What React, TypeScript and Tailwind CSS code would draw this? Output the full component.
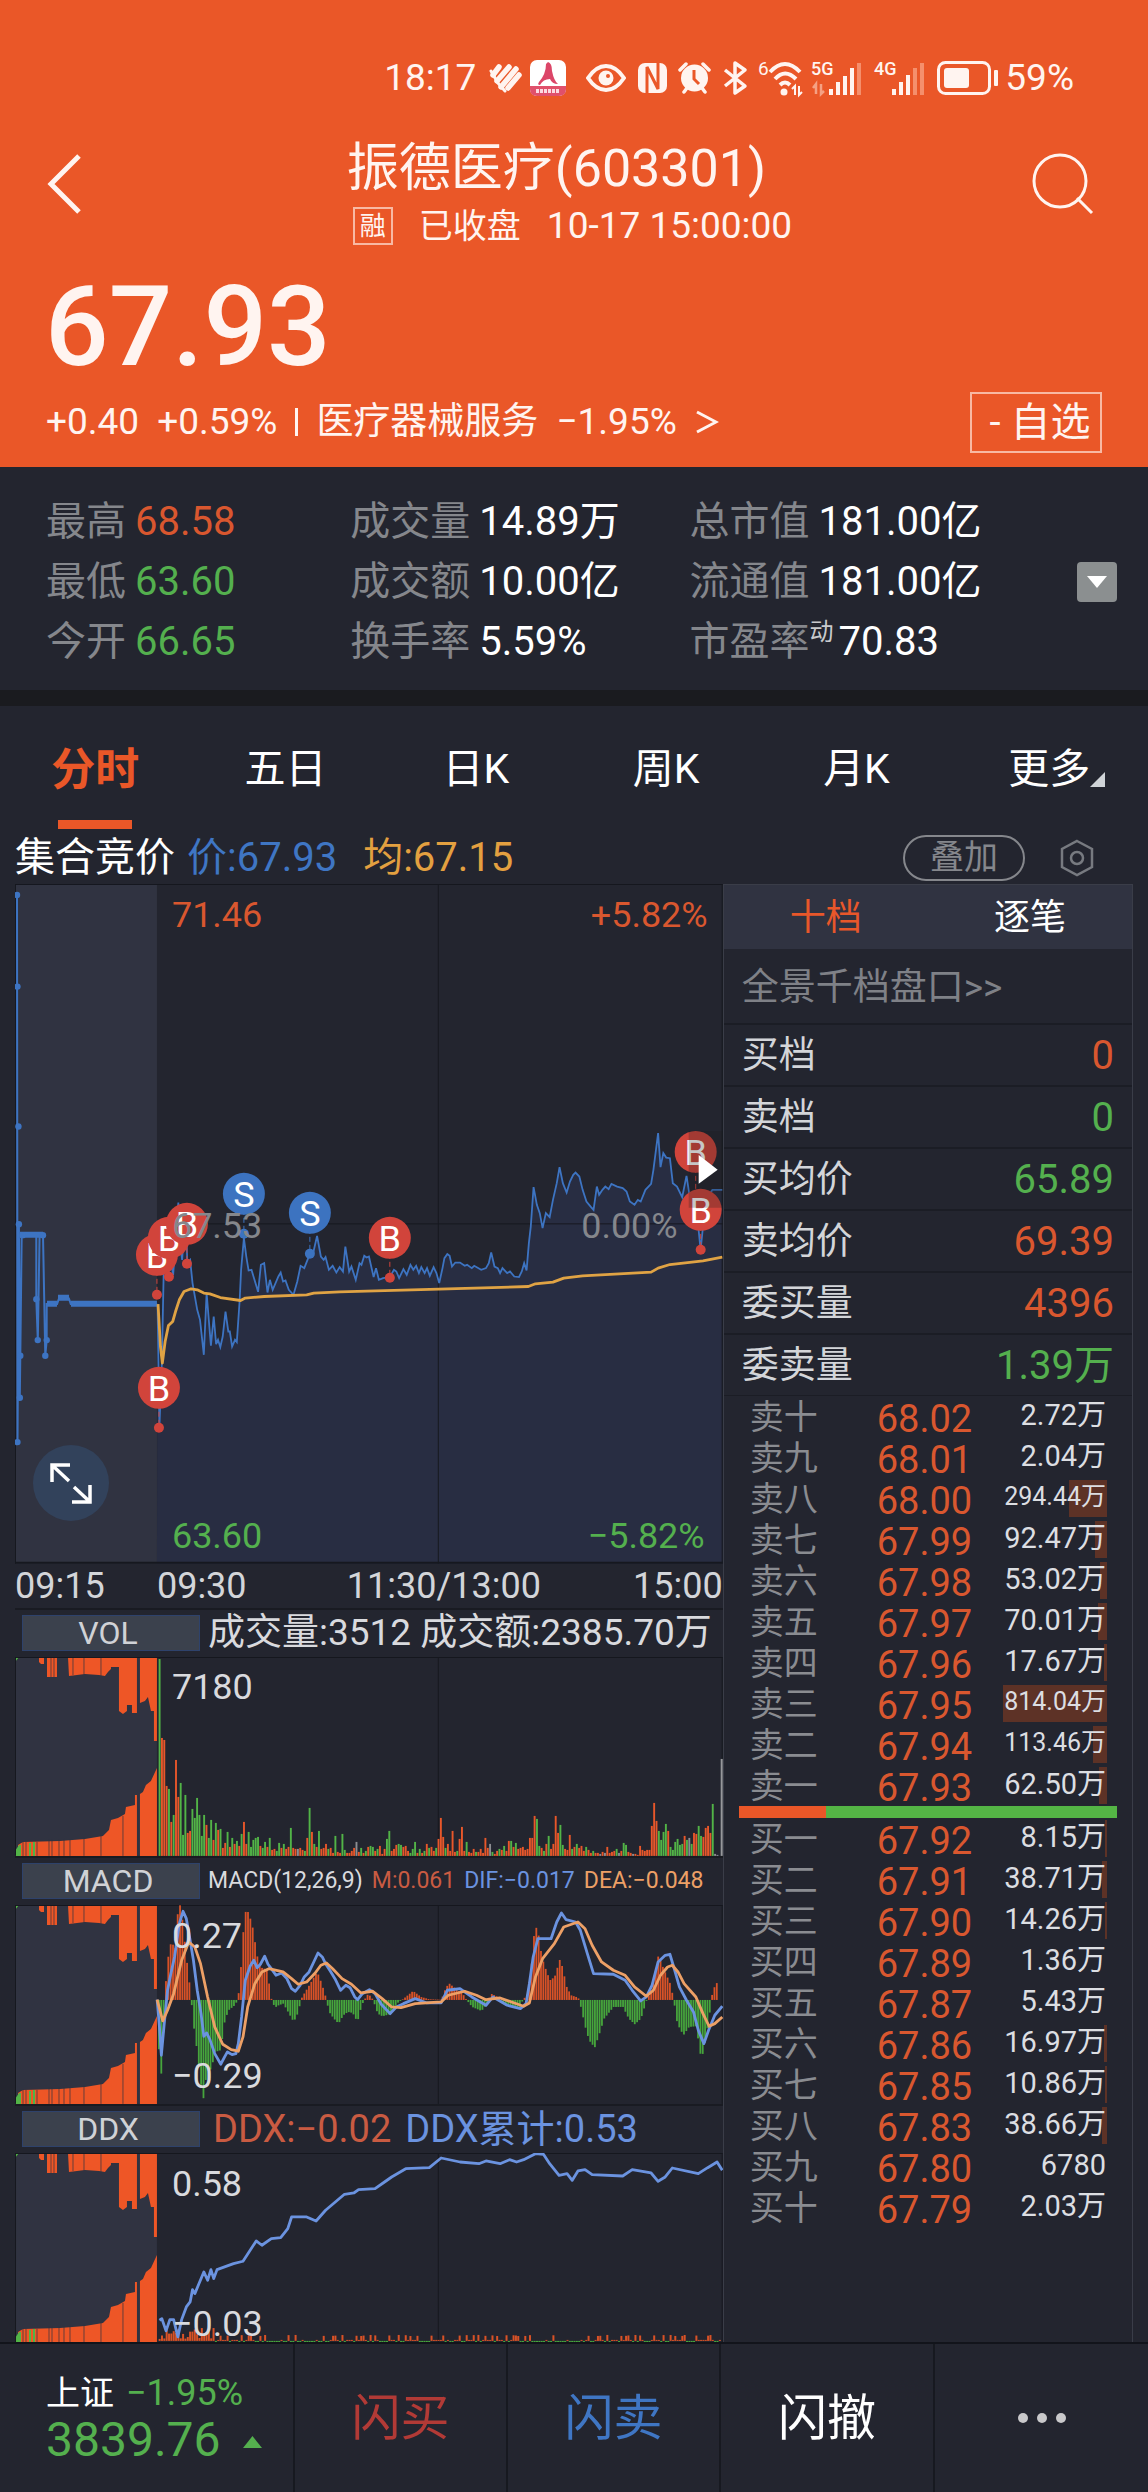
import React, { useState } from 'react';
import clsx from 'clsx';

type Point = [number, number];

// Sample grid: chart samples are stored on a 1568-unit wide grid, 3 units per pixel vertically
const gx = (x: number) => x * 0.472 - 15;
const gy = (y: number, top: number) => (y - top) / 3;

const toPoints = (flat: number[], top: number): Point[] => {
  const out: Point[] = [];
  for (let i = 0; i < flat.length; i += 2) {
    out.push([gx(flat[i]), gy(flat[i + 1], top)]);
  }
  return out;
};

const toPath = (points: Point[]) =>
  points.map(([x, y], i) => `${i ? 'L' : 'M'}${x.toFixed(1)} ${y.toFixed(1)}`).join('');

const valueAt = (points: Point[], x: number) => {
  for (let i = 1; i < points.length; i++) {
    const [x0, y0] = points[i - 1];
    const [x1, y1] = points[i];
    if (x <= x1) return y0 + ((y1 - y0) * (x - x0)) / (x1 - x0 || 1);
  }
  return points[points.length - 1][1];
};

const PRICE_TOP = -828;
const MACD_TOP = 74;
const DDX_TOP = 818;

const price = toPoints([
  334, 433, 338, 800, 343, 610, 347, 330, 352, 235, 356, 345, 362, 300, 367, 345, 372, 250, 378, 128, 382, 250,
  386, 300, 390, 210, 394, 180, 397, 310, 403, 300, 408, 370, 418, 450, 424, 480, 432, 585, 438, 400, 447, 558,
  453, 470, 458, 553, 462, 540, 467, 562, 472, 530, 478, 455, 484, 515, 487, 515, 492, 560, 498, 540, 502, 547,
  508, 420, 511, 330, 517, 235, 522, 290, 527, 332, 533, 330, 547, 396, 553, 315, 560, 310, 567, 398, 572, 360,
  578, 390, 590, 350, 595, 338, 600, 365, 605, 362, 612, 390, 622, 405, 630, 365, 637, 318, 645, 325, 656, 285,
  662, 290, 672, 228, 680, 290, 686, 300, 690, 292, 697, 330, 705, 318, 713, 338, 720, 322, 727, 335, 732, 260,
  740, 335, 745, 320, 754, 360, 762, 310, 766, 315, 772, 288, 777, 293, 782, 290, 792, 352, 797, 325, 803, 360,
  812, 355, 826, 352, 835, 330, 840, 335, 846, 355, 855, 328, 862, 345, 870, 315, 876, 330, 882, 318, 888, 340,
  893, 322, 900, 340, 905, 325, 911, 348, 919, 322, 925, 340, 931, 370, 938, 325, 942, 295, 948, 283, 953, 288,
  958, 320, 965, 308, 975, 308, 985, 318, 990, 315, 1000, 325, 1005, 318, 1020, 330, 1030, 325, 1036, 310,
  1041, 278, 1048, 320, 1055, 325, 1060, 340, 1065, 325, 1075, 340, 1081, 335, 1090, 350, 1100, 352, 1106, 335,
  1111, 310, 1116, 332, 1121, 250, 1125, 200, 1131, 82, 1138, 135, 1144, 160, 1150, 205, 1157, 160, 1165, 172,
  1172, 120, 1180, 70, 1186, 22, 1193, 70, 1201, 98, 1208, 65, 1215, 45, 1220, 38, 1228, 50, 1235, 90, 1243, 125,
  1252, 140, 1258, 150, 1265, 80, 1270, 105, 1277, 90, 1283, 80, 1290, 88, 1296, 72, 1308, 80, 1320, 85, 1328, 95,
  1335, 125, 1345, 135, 1352, 120, 1358, 125, 1368, 90, 1380, 72, 1385, 30, 1395, -80, 1400, 22, 1406, -20,
  1412, -7, 1420, -5, 1426, 70, 1435, 80, 1446, 112, 1455, 48, 1462, 110, 1470, 150, 1480, 200, 1485, 270,
  1490, 200, 1500, 110, 1510, 90, 1531, 90,
], PRICE_TOP);

const average = toPoints([
  335, 433, 340, 560, 344, 610, 350, 545, 357, 497, 366, 485, 372, 455, 380, 420, 390, 395, 405, 387, 418, 390,
  432, 400, 445, 402, 467, 413, 510, 422, 520, 415, 560, 410, 650, 405, 665, 400, 720, 396, 930, 388, 1120, 380,
  1135, 372, 1172, 367, 1195, 355, 1235, 348, 1380, 337, 1395, 325, 1420, 314, 1490, 303, 1531, 292,
], PRICE_TOP);

const auction = toPoints([
  36, -795, 37, 847, 40, 193, 42, 714, 43, 588, 46, 226, 77, 226, 77, 418, 80, 541, 84, 226, 91, 226, 96, 588,
  99, 541, 99, 433, 121, 433, 125, 416, 146, 416, 150, 433, 333, 433,
], PRICE_TOP);

const auctionDots = toPoints([
  36, -795, 37, -520, 39, -100, 40, 193, 42, 714, 43, 588, 37, 847, 48, 226, 91, 226, 77, 418, 80, 541, 96, 588,
  99, 541,
], PRICE_TOP);

const macdBars = toPoints([
  333, 358, 336, 500, 338, 560, 342, 585, 348, 400, 350, 358, 352, 260, 362, 185, 372, 205, 377, 75, 382, 75,
  387, 130, 392, 200, 397, 262, 402, 320, 405, 358, 407, 400, 412, 460, 418, 520, 424, 600, 432, 665, 438, 555,
  447, 570, 455, 515, 467, 510, 476, 420, 484, 390, 497, 375, 503, 360, 507, 320, 513, 205, 517, 110, 522, 85,
  528, 105, 533, 130, 538, 160, 542, 213, 548, 245, 553, 262, 566, 268, 572, 335, 575, 358, 582, 382, 590, 375,
  600, 370, 612, 400, 622, 425, 632, 395, 637, 358, 642, 345, 657, 310, 667, 285, 672, 275, 680, 305, 688, 340,
  691, 358, 697, 395, 707, 415, 717, 430, 727, 405, 737, 395, 747, 398, 757, 425, 766, 375, 772, 358, 780, 340,
  790, 358, 800, 400, 810, 408, 830, 400, 840, 370, 855, 355, 875, 332, 892, 350, 910, 357, 935, 358, 945, 320,
  952, 310, 965, 325, 980, 340, 988, 358, 1000, 380, 1020, 392, 1032, 370, 1040, 340, 1055, 350, 1070, 375,
  1100, 385, 1108, 358, 1116, 345, 1122, 300, 1127, 240, 1131, 168, 1136, 142, 1141, 165, 1148, 230, 1155, 262,
  1165, 300, 1175, 290, 1186, 238, 1192, 262, 1200, 318, 1210, 345, 1225, 352, 1229, 370, 1240, 440, 1248, 480,
  1260, 502, 1270, 460, 1280, 415, 1300, 380, 1320, 380, 1332, 415, 1345, 432, 1358, 415, 1370, 360, 1380, 330,
  1395, 225, 1405, 262, 1420, 310, 1427, 355, 1435, 430, 1448, 465, 1460, 440, 1475, 438, 1486, 540, 1495, 480,
  1505, 385, 1510, 330, 1520, 305, 1531, 295,
], MACD_TOP);

const dif = toPoints([
  333, 358, 338, 440, 342, 525, 348, 430, 355, 330, 362, 280, 370, 230, 380, 130, 388, 93, 395, 115, 403, 180,
  410, 240, 418, 330, 426, 400, 432, 468, 438, 458, 445, 478, 455, 520, 468, 552, 476, 530, 482, 515, 492, 523,
  500, 520, 505, 490, 512, 410, 520, 300, 530, 258, 538, 240, 545, 262, 552, 252, 561, 228, 568, 252, 575, 265,
  585, 285, 597, 278, 608, 295, 618, 325, 626, 333, 636, 315, 645, 290, 655, 275, 665, 245, 674, 218, 683, 230,
  690, 250, 700, 272, 710, 295, 722, 330, 733, 315, 742, 322, 752, 350, 758, 358, 768, 340, 783, 328, 795, 340,
  808, 372, 827, 400, 840, 380, 855, 370, 880, 355, 905, 368, 935, 368, 948, 330, 975, 325, 1000, 350, 1030, 375,
  1045, 350, 1075, 375, 1103, 385, 1115, 370, 1122, 310, 1130, 230, 1140, 175, 1168, 175, 1180, 125, 1190, 98,
  1200, 118, 1220, 125, 1230, 150, 1245, 220, 1258, 280, 1300, 282, 1325, 300, 1340, 330, 1358, 362, 1370, 350,
  1382, 315, 1395, 245, 1410, 225, 1420, 222, 1430, 270, 1440, 320, 1455, 360, 1470, 395, 1480, 450, 1492, 490,
  1502, 450, 1515, 405, 1531, 378,
], MACD_TOP);

const dea = toPoints([
  333, 358, 345, 422, 355, 390, 368, 340, 385, 240, 400, 185, 413, 200, 425, 250, 440, 350, 455, 440, 472, 492,
  490, 508, 505, 513, 515, 470, 525, 380, 540, 310, 555, 275, 570, 265, 600, 275, 618, 295, 632, 312, 650, 305,
  668, 278, 680, 255, 692, 248, 705, 265, 725, 295, 745, 312, 765, 338, 790, 333, 810, 355, 830, 380, 850, 382,
  880, 370, 935, 365, 950, 345, 985, 333, 1010, 345, 1030, 358, 1060, 353, 1090, 368, 1110, 378, 1122, 368,
  1135, 290, 1150, 235, 1175, 190, 1195, 140, 1225, 125, 1240, 145, 1255, 195, 1275, 245, 1300, 270, 1325, 285,
  1345, 320, 1370, 348, 1385, 330, 1400, 285, 1415, 260, 1425, 255, 1437, 275, 1450, 310, 1475, 350, 1490, 400,
  1503, 438, 1515, 430, 1531, 410,
], MACD_TOP);

const ddx = toPoints([
  338, 1320, 343, 1315, 352, 1352, 360, 1318, 368, 1318, 377, 1370, 385, 1318, 395, 1280, 403, 1265, 408, 1228,
  413, 1240, 432, 1175, 440, 1200, 447, 1168, 453, 1195, 460, 1168, 495, 1150, 515, 1143, 543, 1082, 555, 1095,
  575, 1075, 595, 1072, 610, 1045, 618, 1010, 650, 1010, 670, 1022, 690, 990, 715, 960, 730, 942, 750, 938,
  760, 928, 795, 925, 815, 905, 830, 890, 860, 865, 910, 862, 935, 833, 975, 845, 1015, 850, 1030, 842,
  1060, 850, 1080, 838, 1095, 845, 1110, 838, 1135, 820, 1152, 822, 1165, 850, 1185, 885, 1202, 880, 1213, 900,
  1225, 872, 1240, 868, 1255, 883, 1320, 887, 1340, 868, 1380, 878, 1395, 903, 1410, 890, 1425, 863, 1480, 880,
  1500, 862, 1520, 845, 1531, 870,
], DDX_TOP);

// One bar a minute. Positive is up, negative is down
const volume = [
  -197, 118, 116, 70, -67, 34, -41, 96, 59, -73, -21, -61, 23, 25, -47, -38, -58, -41, -20, -41, 31, -18, -36, 16,
  -33, 26, -27, 8, 13, -24, 9, -18, 12, -15, 10, -22, 34, 12, -24, -9, -16, -18, -19, 10, -8, -14, 9, -18, 6, 7,
  -5, -13, 8, -12, 7, 9, -28, 8, 7, -7, 8, 6, -5, 18, -48, 24, -12, 9, -25, 7, 8, 12, -7, 8, 3, -20, 4, 3, -22,
  -6, 3, 3, 5, 8, 14, 4, -8, 3, -5, 9, -10, -9, 5, -7, 10, 2, 7, -17, -25, 5, 7, 11, -12, -11, 9, 10, 5, -3, -7,
  -14, 3, -7, 3, -5, 12, -8, 9, 5, -8, 17, 38, 19, -8, 12, 5, 25, 4, -5, 17, 29, 5, -14, 4, 3, 7, -4, 4, 7, 3,
  18, 8, 12, -4, 2, 5, -7, 6, -10, 5, 15, -15, 9, -13, 7, 8, 9, 6, 7, 18, 18, 40, -37, -10, 8, -5, 12, -20, 7,
  12, 40, 23, -31, -11, 7, 6, 21, -7, 9, -12, 8, 10, 5, -9, 6, 3, -5, 3, 3, 2, 4, -3, 9, 3, 4, 5, -7, 3, 5, -13,
  -11, 4, 3, 2, 2, 1, 10, 6, 5, 6, 6, 30, 53, 35, -25, -16, -24, -32, 25, -9, -6, -14, -17, -11, -12, 20, -16,
  18, -12, 23, 22, -30, -20, 19, 28, 30, 23, -52, 2, 1,
];
const NEUTRAL_MINUTES = [59, 84, 141, 188, 190, 196, 202, 226, 237, 238, 239];

const ddxFlow = Array.from({ length: 240 }, (_, i) => {
  const wave = Math.abs(Math.sin(i * 12.9) * 43.7) % 1;
  return i < 24 ? 2 + wave * 11 : wave > 0.72 ? 2 + wave * 4 : wave > 0.45 ? 1 : -1.5;
});

const barX = (i: number) => 143.7 + i * 2.345;

const RED = '#e8572a';
const GREEN = '#52b447';
const LINE = '#16181f';

type Badge = { kind: 'B' | 'S'; x: number; y: number; dotY: number; noDot?: boolean };
const badges: Badge[] = [
  { kind: 'B', x: 142, y: 371, dotY: 411 },
  { kind: 'B', x: 154, y: 354, dotY: 393 },
  { kind: 'B', x: 172, y: 340, dotY: 380 },
  { kind: 'B', x: 144, y: 504, dotY: 544 },
  { kind: 'S', x: 229, y: 310, dotY: 350 },
  { kind: 'S', x: 295, y: 329, dotY: 370 },
  { kind: 'B', x: 375, y: 354, dotY: 394 },
  { kind: 'B', x: 681, y: 268, dotY: 306, noDot: true },
  { kind: 'B', x: 686, y: 326, dotY: 366 },
];

const PriceChart: React.FC = () => {
  const line = toPath(price);
  return (
    <svg viewBox="0 0 708 680" className="block w-full h-auto" role="img" aria-label="分时走势">
      <rect x="0" y="0" width="142" height="680" fill="#303341" />
      <path d={`${line}L708 680L142 680Z`} fill="#282d42" />
      <path d="M0.5 0V680M423.5 0V680M707.5 0V680M0 0.5H708M142 340H708" stroke={LINE} fill="none" />
      <path d="M0 679H708" stroke={LINE} strokeWidth="2" />

      <path d={toPath(auction)} stroke="#3d74c2" strokeWidth="2" fill="none" />
      <path d="M5 351H28M32 420H42M43 414H54M56 420H142" stroke="#3d74c2" strokeWidth="6" />
      {auctionDots.map(([x, y], i) => (
        <circle key={i} cx={x} cy={y} r="3.2" fill="#3d74c2" />
      ))}
      <path d={line} stroke="#3d74c2" strokeWidth="1.8" fill="none" />
      <path d={toPath(average)} stroke="#e0a344" strokeWidth="2.8" fill="none" strokeLinejoin="round" />

      {badges.map((b, i) => {
        const color = b.kind === 'B' ? '#d1443b' : '#3c73c0';
        return (
          <g key={i}>
            <path d={`M${b.x} ${b.y}V${b.dotY}`} stroke={color} strokeDasharray="5 3" />
            {!b.noDot && <circle cx={b.x} cy={b.dotY} r="5" fill={color} />}
            <circle cx={b.x} cy={b.y} r="21" fill={color} />
            <text x={b.x} y={b.y + 13} fontSize="36" fill="#fff" textAnchor="middle">{b.kind}</text>
          </g>
        );
      })}

      {/* Side drawer handle */}
      <path d="M674 247H708V324H674Z" fill="#1b1d1c" opacity="0.25" />
      <path d="M684 271L703 286L684 300Z" fill="#fff" />

      <g fontSize="36">
        <text x="157" y="43" fill="#d9572f">71.46</text>
        <text x="693" y="43" fill="#d9572f" textAnchor="end">+5.82%</text>
        <text x="157" y="354" fill="#85878c">67.53</text>
        <text x="663" y="354" fill="#85878c" textAnchor="end">0.00%</text>
        <text x="157" y="664" fill="#54b04e">63.60</text>
        <text x="690" y="664" fill="#54b04e" textAnchor="end">−5.82%</text>
      </g>
    </svg>
  );
};

// Call auction background, shared by the three indicator panels
const AuctionBars: React.FC<{ height: number }> = ({ height: h }) => (
  <g>
    <rect width="142" height={h} fill="#303341" />
    <path
      d="M24 0H29V7H26L24 5ZM32 0H42V20H32ZM53 0H96V12L93 15L90 19L84 18L70 17L54 19ZM96 0H104V10H96ZM104 0H122V56H117V48H112V54L108 57L104 54ZM125 0H142V84H139V54H136L133 40L130 44L125 46Z"
      fill="#ee5626"
    />
    <path d="M0 0H4L0 5Z" fill={GREEN} />
    <path
      d={`M3 ${h}V${h - 11}L8 ${h - 14}L45 ${h - 15}L70 ${h - 17}L88 ${h - 20}L94 ${h - 26}L96 ${h - 36}L103 ${h - 38}L110 ${h - 42}L111 ${h - 49}L120 ${h - 51}V${h - 61}H122V${h}ZM125 ${h}V${h - 62}L128 ${h - 64}L131 ${h - 71}L136 ${h - 75}L142 ${h - 88}V${h}Z`}
      fill="#ee5626"
    />
    <path d={`M0 ${h}V${h - 5}L4 ${h - 11}H6V${h}ZM14 ${h}v-13h2v13ZM18 ${h}v-14h2v14Z`} fill={GREEN} />
    <path
      d={`M8 ${h}v-14M11 ${h}v-14M22 ${h}v-14M34 ${h}v-16M37 ${h}v-16M44 ${h}v-16M49 ${h}v-16M55 ${h}v-16M69 ${h}v-18M86 ${h}v-20M36 0V20M39 0V20M58 0V18M69 0V18M86 0V19M108 ${h}v-40`}
      stroke="#303341"
      opacity="0.7"
    />
  </g>
);

const PanelFrame: React.FC<{ height: number }> = ({ height }) => (
  <path d={`M0.5 0V${height}M423.5 0V${height}M707.5 0V${height}M0 0.5H708`} stroke={LINE} fill="none" />
);

const VolumePanel: React.FC = () => (
  <svg viewBox="0 0 708 199" className="block w-full h-auto" role="img" aria-label="VOL">
    <AuctionBars height={199} />
    <PanelFrame height={199} />
    {volume.map((v, i) => (
      <rect
        key={i}
        x={barX(i)}
        y={199 - Math.abs(v)}
        width="1.9"
        height={Math.abs(v)}
        fill={NEUTRAL_MINUTES.includes(i) ? '#8c8d92' : v > 0 ? RED : GREEN}
      />
    ))}
    <rect x="706" y="102" width="2" height="97" fill="#97989c" />
    <text x="157" y="42" fontSize="36" fill="#d9dade">7180</text>
  </svg>
);

const MacdPanel: React.FC = () => (
  <svg viewBox="0 0 708 199" className="block w-full h-auto" role="img" aria-label="MACD">
    <AuctionBars height={199} />
    <PanelFrame height={199} />
    {volume.map((_, i) => {
      const y = valueAt(macdBars, barX(i));
      return (
        <rect
          key={i}
          x={barX(i) - 0.6}
          y={Math.min(y, 95)}
          width="1.8"
          height={Math.abs(y - 95)}
          fill={y < 95 ? '#d95227' : '#46a53c'}
        />
      );
    })}
    <path d={toPath(dif)} stroke="#6b93e0" strokeWidth="2.8" fill="none" strokeLinejoin="round" />
    <path d={toPath(dea)} stroke="#eda066" strokeWidth="2.8" fill="none" strokeLinejoin="round" />
    <g fontSize="36" fill="#d9dade">
      <text x="157" y="43">0.27</text>
      <text x="157" y="183">−0.29</text>
    </g>
  </svg>
);

const DdxPanel: React.FC = () => (
  <svg viewBox="0 0 708 190" className="block w-full h-auto" role="img" aria-label="DDX">
    <AuctionBars height={190} />
    <PanelFrame height={190} />
    {ddxFlow.map((v, i) => (
      <rect
        key={i}
        x={barX(i)}
        y={v > 0 ? 188 - v : 188}
        width="2"
        height={Math.abs(v)}
        fill={v > 0 ? '#d95227' : '#46a53c'}
      />
    ))}
    <path d={toPath(ddx)} stroke="#6b93e0" strokeWidth="2.8" fill="none" strokeLinejoin="round" />
    <g fontSize="36" fill="#d9dade">
      <text x="157" y="43">0.58</text>
      <text x="157" y="183">−0.03</text>
    </g>
  </svg>
);

const IndicatorHeader: React.FC<{ name: string; children: React.ReactNode }> = ({ name, children }) => (
  <div className="flex items-center h-[49px] pl-[7px] border-t-2 border-[#191b22] whitespace-nowrap">
    <button type="button" className="w-[178px] h-[36px] mr-2 pr-[6px] border border-[#2e426b] bg-[#3b414d] text-[32px] leading-[34px] text-[#d0d2d6]">
      {name}
    </button>
    {children}
  </div>
);

const StatusBar: React.FC = () => (
  <div className="flex items-center justify-end h-[44px] pr-[74px] text-[37px] leading-[44px]">
    <span>18:17</span>
    <svg className="ml-[12px]" width="34" height="30" viewBox="0 0 34 30" fill="none" stroke="#fff4f0" strokeWidth="5.5" strokeLinecap="round">
      <path d="M5 12L11 4M9 18L21 4M13 24L28 6M20 25L31 12" />
      <path d="M3 8L10 20L17 28" strokeWidth="3" />
    </svg>
    <svg className="ml-[8px]" width="36" height="36" viewBox="0 0 36 36">
      <rect width="36" height="36" rx="7" fill="#fff" />
      <path d="M0 26H36V29Q36 36 29 36H7Q0 36 0 29Z" fill="#e0506b" />
      <path d="M18 2Q22 3 22 11Q24 21 28 24Q22 24 20 19Q13 19 10 25Q7 25 9 22Q16 14 16 4Z" fill="#dc4668" />
      <path d="M6 31H30" stroke="#fbdbe2" strokeWidth="4" strokeDasharray="3 1" />
    </svg>
    <svg className="ml-[20px]" width="40" height="28" viewBox="0 0 40 28">
      <path d="M2 14Q10 2 20 2T38 14Q30 26 20 26T2 14Z" fill="none" stroke="#fff4f0" strokeWidth="4" />
      <circle cx="20" cy="14" r="7.5" fill="#fff4f0" />
      <circle cx="22" cy="12" r="2" fill="#ea5728" />
    </svg>
    <svg className="ml-[12px]" width="29" height="30" viewBox="0 0 29 30">
      <rect width="29" height="30" rx="7" fill="#fff4f0" />
      <path d="M9 30V4L20 26V0" fill="none" stroke="#ea5728" strokeWidth="3" />
    </svg>
    <svg className="ml-[11px]" width="33" height="32" viewBox="0 0 33 32">
      <path d="M2 8L8 2M31 8L25 2M6 30L9 26M27 30L24 26" stroke="#fff4f0" strokeWidth="3.5" strokeLinecap="round" />
      <circle cx="16.5" cy="16" r="13.5" fill="#fff4f0" />
      <path d="M16 8V17L21 22" fill="none" stroke="#ea5728" strokeWidth="3" />
    </svg>
    <svg className="ml-[12px]" width="25" height="36" viewBox="0 0 25 36" fill="none" stroke="#fff4f0" strokeWidth="3.5" strokeLinejoin="round">
      <path d="M2 10L22 26L12 33V3L22 10L2 26" />
    </svg>
    <svg className="ml-[10px] overflow-visible" width="46" height="36" viewBox="0 0 46 36" fill="none" stroke="#fff4f0" strokeWidth="4">
      <text x="0" y="15" fontSize="19" fill="#fff4f0" stroke="none">6</text>
      <path d="M12 12Q27 -4 42 12M17 19Q27 8 38 19" />
      <path d="M22 25Q27 20 32 25" />
      <circle cx="26" cy="32" r="3.5" fill="#fff4f0" stroke="none" />
      <path d="M34 29L37 26V35M41 26V35L44 32" strokeWidth="2" />
    </svg>
    <svg className="ml-[7px] overflow-visible" width="51" height="36" viewBox="0 0 51 36" fill="#fff4f0">
      <text x="0" y="15" fontSize="18" fontWeight="500">5G</text>
      <path d="M2 28L5 24V34M10 24V34L13 31" stroke="#f5a184" strokeWidth="2.5" fill="none" />
      <path d="M18 29h4v6h-4ZM25 22h4v13h-4ZM32 16h4v19h-4ZM39 8h4v27h-4Z" />
      <path d="M46 3h4v32h-4Z" fill="#f58f6c" />
    </svg>
    <svg className="ml-[12px] overflow-visible" width="51" height="36" viewBox="0 0 51 36" fill="#fff4f0">
      <text x="0" y="15" fontSize="18" fontWeight="500">4G</text>
      <path d="M18 29h4v6h-4ZM25 22h4v13h-4ZM32 15h4v20h-4Z" />
      <path d="M39 8h4v27h-4ZM46 3h4v32h-4Z" fill="#f58f6c" />
    </svg>
    <svg className="ml-[12px] mr-[6px]" width="62" height="34" viewBox="0 0 62 34">
      <rect x="1.5" y="1.5" width="51" height="31" rx="7" fill="none" stroke="#fff4f0" strokeWidth="3" />
      <rect x="7" y="7" width="25" height="20" rx="3" fill="#fff4f0" />
      <rect x="57" y="9" width="4" height="16" rx="1" fill="#fff4f0" />
    </svg>
    <span>59%</span>
  </div>
);

const stats = [
  ['最高', '68.58', 'text-[#d9572f]'],
  ['成交量', '14.89万', 'text-white'],
  ['总市值', '181.00亿', 'text-white'],
  ['最低', '63.60', 'text-[#54b04e]'],
  ['成交额', '10.00亿', 'text-white'],
  ['流通值', '181.00亿', 'text-white'],
  ['今开', '66.65', 'text-[#54b04e]'],
  ['换手率', '5.59%', 'text-white'],
  ['市盈率', '70.83', 'text-white'],
];

const periods = ['分时', '五日', '日K', '周K', '月K', '更多'];

const summary = [
  ['买档', '0', true],
  ['卖档', '0', false],
  ['买均价', '65.89', false],
  ['卖均价', '69.39', true],
  ['委买量', '4396', true],
  ['委卖量', '1.39万', false],
] as const;

type Order = [string, string, string, number];

const asks: Order[] = [
  ['卖十', '68.02', '2.72万', 0],
  ['卖九', '68.01', '2.04万', 0],
  ['卖八', '68.00', '294.44万', 38],
  ['卖七', '67.99', '92.47万', 12],
  ['卖六', '67.98', '53.02万', 7],
  ['卖五', '67.97', '70.01万', 9],
  ['卖四', '67.96', '17.67万', 3],
  ['卖三', '67.95', '814.04万', 104],
  ['卖二', '67.94', '113.46万', 14],
  ['卖一', '67.93', '62.50万', 8],
];

const bids: Order[] = [
  ['买一', '67.92', '8.15万', 2],
  ['买二', '67.91', '38.71万', 5],
  ['买三', '67.90', '14.26万', 2],
  ['买四', '67.89', '1.36万', 0],
  ['买五', '67.87', '5.43万', 0],
  ['买六', '67.86', '16.97万', 3],
  ['买七', '67.85', '10.86万', 2],
  ['买八', '67.83', '38.66万', 5],
  ['买九', '67.80', '6780', 0],
  ['买十', '67.79', '2.03万', 0],
];

const OrderTable: React.FC<{ orders: Order[] }> = ({ orders }) => (
  <table className="w-full table-fixed border-collapse">
    <tbody>
      {orders.map(([label, value, amount, width]) => (
        <tr key={label} className="h-[41px] leading-[28px] whitespace-nowrap">
          <th scope="row" className="w-[153px] p-0 pl-[26px] text-left font-normal text-[34px] text-[#8a8c91]">{label}</th>
          <td className="w-[100px] p-0 pt-[5px] text-[38px] text-[#d9572f]">{value}</td>
          <td className="relative p-0 pr-[26px] pb-[4px] text-right text-[#dcdee2]">
            <span className="absolute right-[25px] top-[2px] h-[37px] bg-[#5d3226]" style={{ width }}></span>
            <span className={clsx('relative block', amount.length > 6 ? 'text-[25px]' : 'text-[29px]')}>{amount}</span>
          </td>
        </tr>
      ))}
    </tbody>
  </table>
);

const App: React.FC = () => {
  const [period, setPeriod] = useState('分时');
  const [bookTab, setBookTab] = useState('十档');

  return (
    <div className="bg-[#23252f] text-white font-[Roboto,'Noto_Sans_CJK_SC',sans-serif]">
      <header className="bg-[#ea5728] pt-[56px] pb-[9px] text-[#fff4f0]">
        <StatusBar />
        <div className="flex items-center h-[168px] pl-[47px] pr-[54px]">
          <button type="button" aria-label="返回">
            <svg width="34" height="60" viewBox="0 0 34 60" fill="none" stroke="#fff4f0" strokeWidth="5">
              <path d="M32 2L4 30L32 58" />
            </svg>
          </button>
          <div className="flex-1 h-full pt-[39px] flex flex-col items-center">
            <h1 className="text-[52px] leading-[60px]">振德医疗(603301)</h1>
            <p className="flex items-center gap-[26px] ml-8 text-[34px] leading-[54px]">
              <span className="border-2 border-[#f8b9a3] w-[40px] h-[38px] text-[26px] leading-[34px] text-center">融</span>
              <span>已收盘</span>
              <span className="text-[37px]">10-17 15:00:00</span>
            </p>
          </div>
          <button type="button" aria-label="搜索">
            <svg width="62" height="62" viewBox="0 0 62 62" fill="none" stroke="#fff4f0" strokeWidth="3">
              <circle cx="28" cy="28" r="26" />
              <path d="M45 45L60 60" />
            </svg>
          </button>
        </div>
        <div className="pl-[45px] text-[112px] leading-[118px] font-medium">67.93</div>
        <div className="flex items-center justify-between h-[72px] pl-[46px] pr-[46px] text-[37px]">
          <a href="#sector" className="flex items-center gap-[18px]">
            <span>+0.40</span>
            <span>+0.59%</span>
            <span className="w-[3px] h-[28px] bg-[#fff4f0]"></span>
            <span>医疗器械服务</span>
            <span>−1.95%</span>
            <svg width="24" height="24" viewBox="0 0 24 24" fill="none" stroke="#fff4f0" strokeWidth="3">
              <path d="M2 2L21 12L2 22" />
            </svg>
          </a>
          <button type="button" className="w-[132px] h-[61px] pl-2 border-2 border-[#f8b9a3] text-[40px] leading-[57px] whitespace-nowrap">- 自选</button>
        </div>
      </header>

      <section className="grid grid-cols-[304fr_339fr_387fr_71fr] pl-[46px] pt-[25px] pb-[18px] text-[40px] leading-[60px] whitespace-nowrap">
        <dl className="contents">
          {stats.map(([label, value, color], i) => (
            <div key={label} className={clsx('flex gap-[9px]', i % 3 === 0 && 'col-start-1')}>
              <dt className="text-[#85878c]">
                {label}
                {label === '市盈率' && <span className="inline-block -mr-1 align-top text-[24px] leading-[40px] text-[#c9cacd]">动</span>}
              </dt>
              <dd className={color}>{value}</dd>
            </div>
          ))}
        </dl>
        <button type="button" aria-label="展开" className="col-start-4 row-start-2 self-center w-[40px] h-[40px] rounded bg-[#8b8f90]">
          <svg className="mx-auto" width="20" height="12" viewBox="0 0 20 12">
            <path d="M0 0H20L10 12Z" fill="#fff" />
          </svg>
        </button>
      </section>

      <nav className="grid grid-cols-6 pr-[6px] border-t-[16px] border-[#1a1b1f]">
        {periods.map((name) => (
          <button key={name} type="button" onClick={() => setPeriod(name)} className="flex flex-col items-center">
            <span
              className={clsx(
                'flex items-center h-[114px] pt-[13px] whitespace-nowrap',
                period === name ? 'text-[44px] font-bold text-[#ea5728]' : 'text-[41px]'
              )}
            >
              {name}
              {name === '更多' && (
                <svg className="-mr-5 mt-5" width="15" height="15" viewBox="0 0 15 15">
                  <path d="M15 0V15H0Z" fill="#d0d4d8" />
                </svg>
              )}
            </span>
            <span className={clsx('w-[74px] h-[9px]', period === name && 'bg-[#ea5728]')}></span>
          </button>
        ))}
      </nav>

      <div className="flex items-center h-[55px] pt-[2px] pl-[15px] pr-[54px] text-[40px] whitespace-nowrap">
        <span className="mr-[12px]">集合竞价</span>
        <span className="mr-[26px] text-[#3f76c4]">价:67.93</span>
        <span className="text-[#e3a040]">均:67.15</span>
        <button type="button" className="ml-auto mr-[35px] w-[122px] h-[46px] rounded-full border-2 border-[#85878c] text-[34px] leading-[41px] text-[#85878c]">叠加</button>
        <button type="button" aria-label="设置">
          <svg width="34" height="38" viewBox="0 0 34 38" fill="none" stroke="#777a80" strokeWidth="2.5">
            <path d="M17 2L32 10V28L17 36L2 28V10Z" />
            <circle cx="17" cy="19" r="6" />
          </svg>
        </button>
      </div>

      <main className="flex px-[15px]">
        <div className="w-[63.3%] shrink-0">
          <div className="relative">
            <PriceChart />
            <button type="button" aria-label="全屏" className="absolute left-[18px] bottom-[43px] w-[76px] h-[76px] rounded-full bg-[#32425b]">
              <svg className="mx-auto" width="44" height="44" viewBox="0 0 44 44" fill="none" stroke="#fff" strokeWidth="3.5">
                <path d="M3 21V4H21M4 5L20 20M41 24V41H23M40 40L25 26" />
              </svg>
            </button>
          </div>
          <div className="grid grid-cols-[142fr_190fr_204fr_172fr] text-[36px] leading-[44px] text-[#d3d5d9]">
            <span>09:15</span>
            <span>09:30</span>
            <span>11:30/13:00</span>
            <span className="text-right">15:00</span>
          </div>
          <IndicatorHeader name="VOL">
            <span className="text-[37px] text-[#d9dade]">成交量:3512 成交额:2385.70万</span>
          </IndicatorHeader>
          <VolumePanel />
          <IndicatorHeader name="MACD">
            <p className="flex gap-[9px] text-[23px] text-[#d9dade]">
              <span>MACD(12,26,9)</span>
              <span className="text-[#c95b42]">M:0.061</span>
              <span className="text-[#6b93e0]">DIF:−0.017</span>
              <span className="text-[#eda066]">DEA:−0.048</span>
            </p>
          </IndicatorHeader>
          <MacdPanel />
          <IndicatorHeader name="DDX">
            <p className="flex gap-[14px] pl-[5px] text-[38px]">
              <span className="text-[#c95b42]">DDX:−0.02</span>
              <span className="text-[#6b93e0]">DDX累计:0.53</span>
            </p>
          </IndicatorHeader>
          <DdxPanel />
        </div>

        <aside className="flex-1 min-w-0 border border-b-0 border-[#3a3d48]">
          <div className="grid grid-cols-2 h-[64px] pt-[2px] bg-[#303341] text-[36px]">
            {['十档', '逐笔'].map((name) => (
              <button key={name} type="button" onClick={() => setBookTab(name)} className={clsx(bookTab === name && 'text-[#e8572a]')}>
                {name}
              </button>
            ))}
          </div>
          <a href="#depth" className="block h-[74px] pl-[18px] text-[37px] leading-[77px] text-[#7f8187] whitespace-nowrap">全景千档盘口&gt;&gt;</a>
          <dl>
            {summary.map(([label, value, up]) => (
              <div key={label} className="flex justify-between h-[62px] px-[18px] border-t-2 border-[#1b1d25] leading-[62px]">
                <dt className="text-[37px] text-[#d3d5d9]">{label}</dt>
                <dd className={clsx('text-[40px]', up ? 'text-[#d9572f]' : 'text-[#54b04e]')}>{value}</dd>
              </div>
            ))}
          </dl>
          <div className="border-t border-[#1b1d25]">
            <OrderTable orders={asks} />
            <div className="flex h-[12px] mx-[15px]">
              <div className="w-[23%] bg-[#ea5728]"></div>
              <div className="flex-1 bg-[#54b545]"></div>
            </div>
            <OrderTable orders={bids} />
          </div>
        </aside>
      </main>

      <footer className="grid grid-cols-[295fr_213fr_213fr_214fr_213fr] h-[150px] border-t-2 border-[#12141b] divide-x-2 divide-[#171920] text-[49px] whitespace-nowrap">
        <a href="#index" className="flex flex-col justify-center pl-[46px] text-[#54b04e]">
          <span className="flex items-center gap-[12px] text-[36px] leading-[44px]">
            <span className="text-[34px] text-white">上证</span>−1.95%
          </span>
          <span className="flex items-center gap-[22px] text-[48px] leading-[50px]">
            3839.76
            <svg className="mt-1" width="19" height="12" viewBox="0 0 19 12">
              <path d="M9.5 0L19 12H0Z" fill="#54b04e" />
            </svg>
          </span>
        </a>
        <button type="button" className="text-[#b23a36]">闪买</button>
        <button type="button" className="text-[#3f76c4]">闪卖</button>
        <button type="button">闪撤</button>
        <button type="button" aria-label="更多操作">
          <svg className="mx-auto" width="48" height="10" viewBox="0 0 48 10" fill="#c9c9cb">
            <circle cx="5" cy="5" r="5" />
            <circle cx="24" cy="5" r="5" />
            <circle cx="43" cy="5" r="5" />
          </svg>
        </button>
      </footer>
    </div>
  );
};

export default App;
